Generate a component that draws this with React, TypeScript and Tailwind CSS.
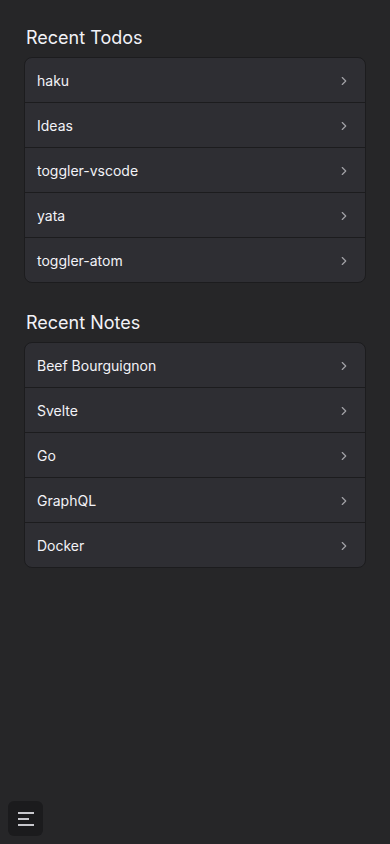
const todos = ["haku", "Ideas", "toggler-vscode", "yata", "toggler-atom"];
const notes = ["Beef Bourguignon", "Svelte", "Go", "GraphQL", "Docker"];

function Chevron() {
  return (
    <svg className="w-[14px] h-[14px] text-[#a1a1a6]" viewBox="0 0 24 24" fill="none" stroke="currentColor" strokeWidth="2" strokeLinecap="round" strokeLinejoin="round">
      <path d="M9 6l6 6-6 6" />
    </svg>
  );
}

function List({ title, items }: { title: string; items: string[] }) {
  return (
    <section className="flex flex-col">
      <h2 className="text-[18px] leading-7 font-normal text-[#f2f2f7] px-[2px] mb-[5px]">{title}</h2>
      <ul className="rounded-lg border border-[#1c1c1e] bg-[#2e2e33] overflow-hidden">
        {items.map((item, i) => (
          <li
            key={item}
            className={`box-content flex items-center justify-between h-[42px] pt-[2px] pl-3 pr-[14px] text-sm text-[#f2f2f7] ${i > 0 ? "border-t border-[#1c1c1e]" : ""}`}
          >
            <span>{item}</span>
            <Chevron />
          </li>
        ))}
      </ul>
    </section>
  );
}

export default function App() {
  return (
    <div className="min-h-[844px] bg-[#262628] font-['Inter',sans-serif] antialiased">
      <div className="px-6 pt-6 flex flex-col gap-[26px]">
        <List title="Recent Todos" items={todos} />
        <List title="Recent Notes" items={notes} />
      </div>
      <button className="fixed left-2 bottom-2 w-[35px] h-[35px] rounded-md bg-[#1b1b1d] flex items-center justify-center">
        <svg className="w-4 h-[14px]" viewBox="0 0 16 14" fill="none" stroke="#c7c7cc" strokeWidth="2">
          <path d="M0 1h16M0 7h11M0 13h16" />
        </svg>
      </button>
    </div>
  );
}
